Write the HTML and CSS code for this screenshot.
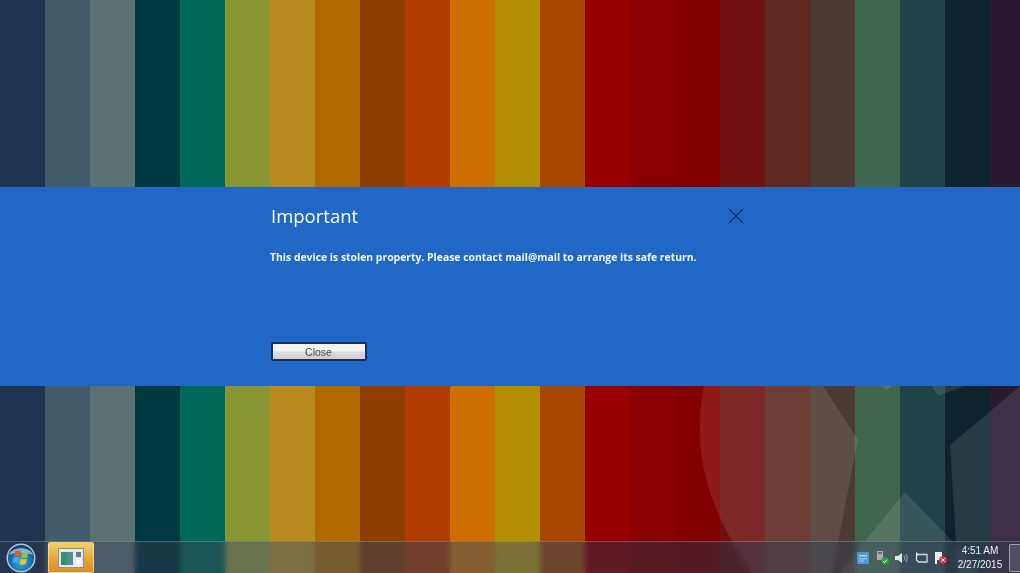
FILE: index.html
```html
<!DOCTYPE html>
<html lang="en">
<head>
<meta charset="utf-8">
<title>Important</title>
<link rel="stylesheet" href="styles.css">
</head>
<body>
<div class="desktop">
  <svg class="wallpaper-shapes" width="1020" height="573" viewBox="0 0 1020 573" aria-hidden="true">
    <path class="shape" d="M823 386 L858 440 L832 573 L752 573 C715 520 698 470 700 423 C700 410 702 398 704 386 Z"/>
    <path class="shape" d="M905 492 L865 541 L840 573 L980 573 L952 541 Z"/>
    <path class="shape" d="M1020 386 L950 445 L958 573 L1020 573 Z"/>
    <path class="shape" d="M932 386 L938 396 L965 386 Z"/>
    <path class="shape" d="M882 386 L887 390 L893 386 Z"/>
  </svg>

  <section class="band">
    <div class="dialog">
      <header class="dialog-head">
        <h1 class="dialog-title">Important</h1>
        <svg class="dialog-x" width="16" height="16" viewBox="0 0 16 16" aria-label="Close">
          <path d="M1 1 L15 15 M15 1 L1 15"/>
        </svg>
      </header>
      <p class="dialog-msg">This device is stolen property. Please contact mail@mail to arrange its safe return.</p>
      <button class="dialog-btn" type="button">Close</button>
    </div>
  </section>

  <footer class="taskbar">
    <svg class="orb" width="30" height="30" viewBox="0 0 30 30" aria-label="Start">
      <defs>
        <radialGradient id="orbFill" cx="50%" cy="65%" r="62%">
          <stop offset="0" stop-color="#35b0f0"/>
          <stop offset=".65" stop-color="#1272b4"/>
          <stop offset="1" stop-color="#0c3f70"/>
        </radialGradient>
      </defs>
      <circle cx="15" cy="15" r="14.5" fill="#b4c4d0"/>
      <circle cx="15" cy="15" r="13" fill="url(#orbFill)"/>
      <path d="M3 12 C6 3 24 3 27 12 C20 9 10 9 3 12 Z" fill="#dde9f2" opacity=".6"/>
      <path d="M9 8.500 C11 7.600 13 7.700 15 8.600 L14 13.600 C12 12.700 10 12.700 8 13.500 Z" fill="#ea5a2c"/>
      <path d="M16 9 C18 10 20 10 22.500 9 L21.300 14.500 C19 15.400 17 15.400 15 14.500 Z" fill="#8cc63f"/>
      <path d="M7.700 14.700 C9.700 13.900 11.700 13.900 13.700 14.800 L12.600 20 C10.600 19 8.600 19 6.500 19.900 Z" fill="#45a6ee"/>
      <path d="M14.800 15.700 C16.800 16.600 18.800 16.600 21 15.700 L19.800 21 C17.700 21.900 15.700 21.900 13.700 21 Z" fill="#f6c21c"/>
    </svg>

    <div class="task-btn">
      <svg width="26" height="20" viewBox="0 0 26 20" aria-hidden="true">
        <rect x=".5" y=".5" width="25" height="19" fill="#e6e8e6" stroke="#8c9090"/>
        <rect x="3" y="4" width="12" height="13" fill="#4f8f9a"/>
        <rect x="3" y="4" width="6" height="13" fill="#3c8f6c"/>
        <rect x="18" y="4" width="5" height="5" fill="#5e7f92"/>
        <rect x="18" y="10" width="5" height="7" fill="#f7f7f7"/>
      </svg>
    </div>

    <div class="tray">
      <svg width="12" height="12" viewBox="0 0 12 12" aria-hidden="true">
        <rect width="12" height="12" rx="1" fill="#4e9ad0"/>
        <rect x="2" y="3" width="8" height="1.5" fill="#a8d2ee"/>
        <rect x="2" y="6" width="8" height="1.5" fill="#8fc2e4"/>
        <rect x="2" y="8.500" width="5" height="1.200" fill="#8fc2e4"/>
      </svg>
      <svg width="13" height="14" viewBox="0 0 13 14" aria-hidden="true">
        <rect x="1" y="0" width="6" height="9" fill="#a9aeb4"/>
        <rect x="2" y="1" width="4" height="2" fill="#6d7278"/>
        <circle cx="9" cy="10" r="3.800" fill="#2f9e3a"/>
        <path d="M7 10 L8.600 11.600 L11 8.600" fill="none" stroke="#dff5da" stroke-width="1"/>
      </svg>
      <svg width="13" height="12" viewBox="0 0 13 12" aria-hidden="true">
        <path d="M0 4 H3 L7 1 V11 L3 8 H0 Z" fill="#e4e8ea"/>
        <path d="M9 3.500 C10 5 10 7 9 8.500 M11 2 C12.500 4.500 12.500 7.500 11 10" fill="none" stroke="#9ea8ae" stroke-width="1"/>
      </svg>
      <svg width="13" height="12" viewBox="0 0 13 12" aria-hidden="true">
        <path d="M2 2.500 H12 V10 H3.500 L1.500 8 V4" fill="none" stroke="#d4dadc" stroke-width="1.300"/>
        <path d="M1 0 L4 2.500 L1 5 Z" fill="#e4e8ea"/>
      </svg>
      <svg width="13" height="13" viewBox="0 0 13 13" aria-hidden="true">
        <path d="M1 1 H8 V9 H3 V13 H1 Z" fill="#eceeee"/>
        <circle cx="9" cy="9" r="3.800" fill="#d8323a"/>
        <path d="M7.300 7.300 L10.700 10.700 M10.700 7.300 L7.300 10.700" stroke="#fff" stroke-width="1"/>
      </svg>
    </div>
    <div class="clock">
      <span>4:51 AM</span>
      <span>2/27/2015</span>
    </div>
    <div class="show-desktop"></div>
  </footer>
</div>
</body>
</html>
```
FILE: styles.css
```css
* { box-sizing: border-box; }

html, body {
  margin: 0;
  height: 100%;
  overflow: hidden;
}

.desktop {
  position: relative;
  width: 100%;
  height: 573px;
  display: flex;
  flex-direction: column;
  padding-top: 187px;
  font-family: "Open Sans", "Liberation Sans", sans-serif;
  background: linear-gradient(to right,
    #1f3450 0 45px, #435c6c 45px 90px, #5a7272 90px 135px, #003a40 135px 180px,
    #006858 180px 225px, #889533 225px 270px, #b8891e 270px 315px, #b06a00 315px 360px,
    #8f3e00 360px 405px, #b03c00 405px 450px, #cc6e00 450px 495px, #b38e00 495px 540px,
    #a84800 540px 585px, #980000 585px 630px, #8a0000 630px 675px, #840000 675px 720px,
    #701010 720px 765px, #5e2820 765px 810px, #4e3a32 810px 855px, #406650 855px 900px,
    #204448 900px 945px, #0e242c 945px 990px, #2a1a30 990px 1020px);
}

.wallpaper-shapes {
  position: absolute;
  inset: 0;
}

.shape { fill: rgba(255, 255, 255, 0.1); }

.band {
  position: relative;
  height: 199px;
  background: #2067c6;
  padding-left: 270px;
}

.dialog {
  width: 474px;
  display: flex;
  flex-direction: column;
  height: 100%;
  padding-top: 15px;
  filter: blur(0.4px);
}

.dialog-head {
  display: flex;
  justify-content: space-between;
  align-items: center;
  height: 28px;
}

.dialog-title {
  margin: 0 0 0 1px;
  font-size: 18.500px;
  line-height: 28px;
  font-weight: 400;
  color: #fff;
}

.dialog-x { flex: none; }

.dialog-x path {
  fill: none;
  stroke: #17365f;
  stroke-width: 1.300;
}

.dialog-msg {
  margin: 20px 0 0;
  font-family: "Open Sans", sans-serif;
  font-size: 10.400px;
  line-height: 14px;
  font-weight: 700;
  white-space: nowrap;
  color: #f2f6fc;
}

.dialog-btn {
  margin: 78px 0 0 1px;
  width: 96px;
  height: 19px;
  padding: 0 1px 0 0;
  border: 2px solid #1a3058;
  border-radius: 2px;
  background: linear-gradient(#f3f3f3 0 45%, #dcdcdc 55%, #cfcfcf);
  font-family: "Liberation Sans", sans-serif;
  font-size: 10.500px;
  color: #4a4a4a;
}

.taskbar {
  position: relative;
  margin-top: auto;
  height: 32px;
  display: flex;
  align-items: center;
  padding-left: 6px;
  border-top: 1px solid rgba(150, 165, 180, 0.4);
  background: rgba(45, 60, 90, 0.36);
  backdrop-filter: blur(2.500px) saturate(0.75);
  color: #fff;
}

.orb {
  flex: none;
  filter: blur(0.4px);
}

.task-btn {
  flex: none;
  margin-left: 12px;
  width: 46px;
  height: 31px;
  display: flex;
  align-items: center;
  justify-content: center;
  border: 1px solid rgba(255, 230, 160, 0.7);
  border-radius: 2px;
  background: linear-gradient(#f0d468, #e8a63a 55%, #dc8a24);
  filter: blur(0.4px);
}

.tray {
  margin-left: auto;
  display: flex;
  align-items: center;
  gap: 6.500px;
  filter: blur(0.4px);
}

.clock {
  flex: none;
  width: 58px;
  margin-left: 4px;
  display: flex;
  flex-direction: column;
  align-items: center;
  gap: 1px;
  font-family: "Liberation Sans", sans-serif;
  font-size: 10px;
  line-height: 13px;
  color: #eef1f3;
  filter: blur(0.4px);
}

.show-desktop {
  flex: none;
  width: 11px;
  height: 28px;
  border: 1px solid rgba(210, 215, 220, 0.6);
  border-right: 0;
  border-radius: 2px 0 0 2px;
  background: rgba(150, 155, 160, 0.25);
}
```
